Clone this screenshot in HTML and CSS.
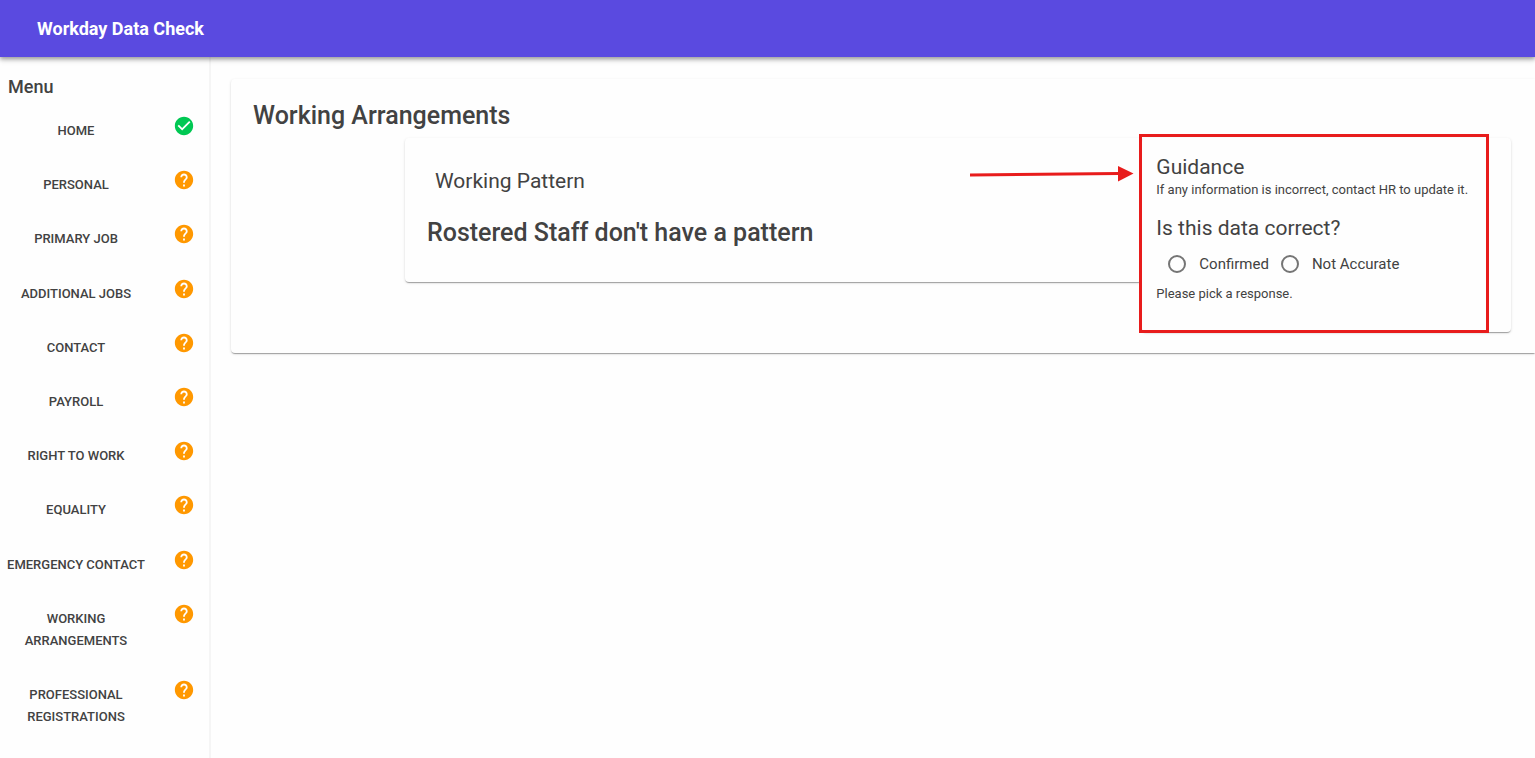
FILE: index.html
```html
<!DOCTYPE html>
<html lang="en">
<head>
    <meta charset="UTF-8">
    <meta name="viewport" content="width=device-width, initial-scale=1.0">
    <title>Workday Data Check</title>
    <link rel="stylesheet" href="styles.css">
</head>
<body>
    <svg class="sprite" aria-hidden="true">
        <symbol id="icon-done" viewBox="0 0 24 24">
            <path d="M12 2C6.48 2 2 6.48 2 12s4.48 10 10 10 10-4.48 10-10S17.52 2 12 2zm-2 15-5-5 1.41-1.41L10 14.17l7.59-7.59L19 8l-9 9z"/>
        </symbol>
        <symbol id="icon-help" viewBox="0 0 24 24">
            <path d="M12 2C6.48 2 2 6.48 2 12s4.48 10 10 10 10-4.48 10-10S17.52 2 12 2zm1 17h-2v-2h2v2zm2.07-7.75-.9.92C13.45 12.9 13 13.5 13 15h-2v-.5c0-1.1.45-2.1 1.17-2.83l1.24-1.26c.37-.36.59-.86.59-1.41 0-1.1-.9-2-2-2s-2 .9-2 2H8c0-2.21 1.79-4 4-4s4 1.79 4 4c0 .88-.36 1.68-.93 2.25z"/>
        </symbol>
    </svg>

    <header class="app-bar">
        <span class="app-title">Workday Data Check</span>
    </header>

    <div class="layout">
        <nav class="sidebar" aria-labelledby="menu-title">
            <h2 class="menu-title" id="menu-title">Menu</h2>
            <ul class="menu">
                <li class="menu-item"><button class="menu-btn" type="button">Home</button><svg class="status done"><use href="#icon-done"/></svg></li>
                <li class="menu-item"><button class="menu-btn" type="button">Personal</button><svg class="status"><use href="#icon-help"/></svg></li>
                <li class="menu-item"><button class="menu-btn" type="button">Primary Job</button><svg class="status"><use href="#icon-help"/></svg></li>
                <li class="menu-item"><button class="menu-btn" type="button">Additional Jobs</button><svg class="status"><use href="#icon-help"/></svg></li>
                <li class="menu-item"><button class="menu-btn" type="button">Contact</button><svg class="status"><use href="#icon-help"/></svg></li>
                <li class="menu-item"><button class="menu-btn" type="button">Payroll</button><svg class="status"><use href="#icon-help"/></svg></li>
                <li class="menu-item"><button class="menu-btn" type="button">Right to Work</button><svg class="status"><use href="#icon-help"/></svg></li>
                <li class="menu-item"><button class="menu-btn" type="button">Equality</button><svg class="status"><use href="#icon-help"/></svg></li>
                <li class="menu-item"><button class="menu-btn" type="button">Emergency Contact</button><svg class="status"><use href="#icon-help"/></svg></li>
                <li class="menu-item"><button class="menu-btn" type="button">Working Arrangements</button><svg class="status"><use href="#icon-help"/></svg></li>
                <li class="menu-item"><button class="menu-btn" type="button">Professional Registrations</button><svg class="status"><use href="#icon-help"/></svg></li>
            </ul>
        </nav>

        <main class="content">
            <section class="card page-card">
                <h1 class="page-title">Working Arrangements</h1>
                <div class="panels">
                    <article class="card pattern">
                        <h2 class="pattern-label">Working Pattern</h2>
                        <p class="pattern-value">Rostered Staff don't have a pattern</p>
                    </article>

                    <aside class="card guidance">
                        <h2 class="heading">Guidance</h2>
                        <p class="note">If any information is incorrect, contact HR to update it.</p>
                        <fieldset class="question">
                            <legend class="heading">Is this data correct?</legend>
                            <div class="options">
                                <label class="option"><input class="radio" type="radio" name="correct">Confirmed</label>
                                <label class="option"><input class="radio" type="radio" name="correct">Not Accurate</label>
                            </div>
                        </fieldset>
                        <p class="note">Please pick a response.</p>

                        <div class="highlight"></div>
                        <svg class="arrow" viewBox="0 0 164 16" aria-hidden="true">
                            <path d="M0 9 149 7.500" stroke="#e81c1c" stroke-width="3"/>
                            <path d="M148 0v15.500L163.500 7.500z" fill="#e81c1c"/>
                        </svg>
                    </aside>
                </div>
            </section>
        </main>
    </div>
</body>
</html>
```
FILE: styles.css
```css
* { margin: 0; padding: 0; box-sizing: border-box; }

body {
    display: flex;
    flex-direction: column;
    min-height: 100vh;
    font-family: Roboto, "Liberation Sans", sans-serif;
    font-size: 13px;
    color: #424242;
    background: #fefefe;
    overflow-x: hidden;
}

.sprite { display: none; }

.app-bar {
    position: relative;
    z-index: 1;
    padding: 18px 37px 17px;
    background: #5a4ae0;
    color: #ffffff;
    box-shadow: 0 2px 4px rgba(0, 0, 0, 0.3), 0 3px 6px rgba(0, 0, 0, 0.14);
}

.app-title {
    display: block;
    font-size: 18px;
    font-weight: 700;
    line-height: 22px;
}

.layout {
    display: flex;
    flex: 1;
}

/* Sidebar */
.sidebar {
    display: flex;
    flex-direction: column;
    flex: 0 0 211px;
    padding: 18px 0 25px;
    border-right: 2px solid #f5f5f5;
}

.menu-title {
    padding-left: 8px;
    margin-bottom: 16px;
    font-size: 18px;
    font-weight: 500;
    line-height: 24px;
}

.menu {
    display: flex;
    flex: 1;
    flex-direction: column;
    justify-content: space-between;
    list-style: none;
}

.menu-item {
    display: flex;
    align-items: flex-start;
    justify-content: space-between;
    padding-right: 14px;
}

.menu-btn {
    width: 152px;
    padding: 5px;
    border: none;
    background: none;
    font-family: inherit;
    font-size: 13px;
    font-weight: 500;
    line-height: 22px;
    text-transform: uppercase;
    color: inherit;
    cursor: pointer;
}

.status {
    width: 22px;
    height: 22px;
    fill: #ff9800;
}

.status.done { fill: #00c853; }

/* Content */
.content {
    flex: 1;
    min-width: 0;
    padding: 22px 0 22px 20px;
}

.card {
    background: #fefefe;
    border-radius: 4px;
    box-shadow: 0 2px 1px -1px rgba(0, 0, 0, 0.2), 0 1px 1px rgba(0, 0, 0, 0.14), 0 1px 3px rgba(0, 0, 0, 0.12);
}

.page-card {
    padding: 22px 24px 21px 22px;
    border-radius: 4px 0 0 4px;
}

.page-title {
    margin-bottom: 7px;
    font-size: 25px;
    font-weight: 500;
    line-height: 30px;
}

.panels {
    display: grid;
    grid-template-columns: 2fr 1fr;
    align-items: start;
    margin-left: 152px;
}

.pattern { padding: 30px 22px 34px; }

.pattern-label {
    padding-left: 8px;
    margin-bottom: 24px;
    font-size: 21px;
    font-weight: 400;
    line-height: 26px;
}

.pattern-value {
    font-size: 25px;
    font-weight: 500;
    line-height: 30px;
}

.guidance {
    position: relative;
    padding: 16px 14px 28px;
}

.heading {
    font-size: 21px;
    font-weight: 400;
    line-height: 26px;
}

.note { line-height: 20px; }

.question {
    margin: 15px 0 9px;
    border: none;
}

.options {
    display: flex;
    gap: 12px;
    padding: 12px 0 0 12px;
}

.option {
    display: flex;
    align-items: center;
    gap: 13px;
    font-size: 15px;
    line-height: 22px;
}

.radio {
    appearance: none;
    width: 18px;
    height: 18px;
    border: 2px solid #757575;
    border-radius: 50%;
}

.radio:checked {
    background: #5a4ae0;
    box-shadow: inset 0 0 0 3px #fefefe;
}

/* Callout over the guidance panel */
.highlight {
    position: absolute;
    inset: -4px 22px -1px -3px;
    border: 3px solid #e81c1c;
    pointer-events: none;
}

.arrow {
    position: absolute;
    top: 28px;
    right: 100%;
    width: 164px;
    height: 16px;
    margin-right: 8px;
}
```
